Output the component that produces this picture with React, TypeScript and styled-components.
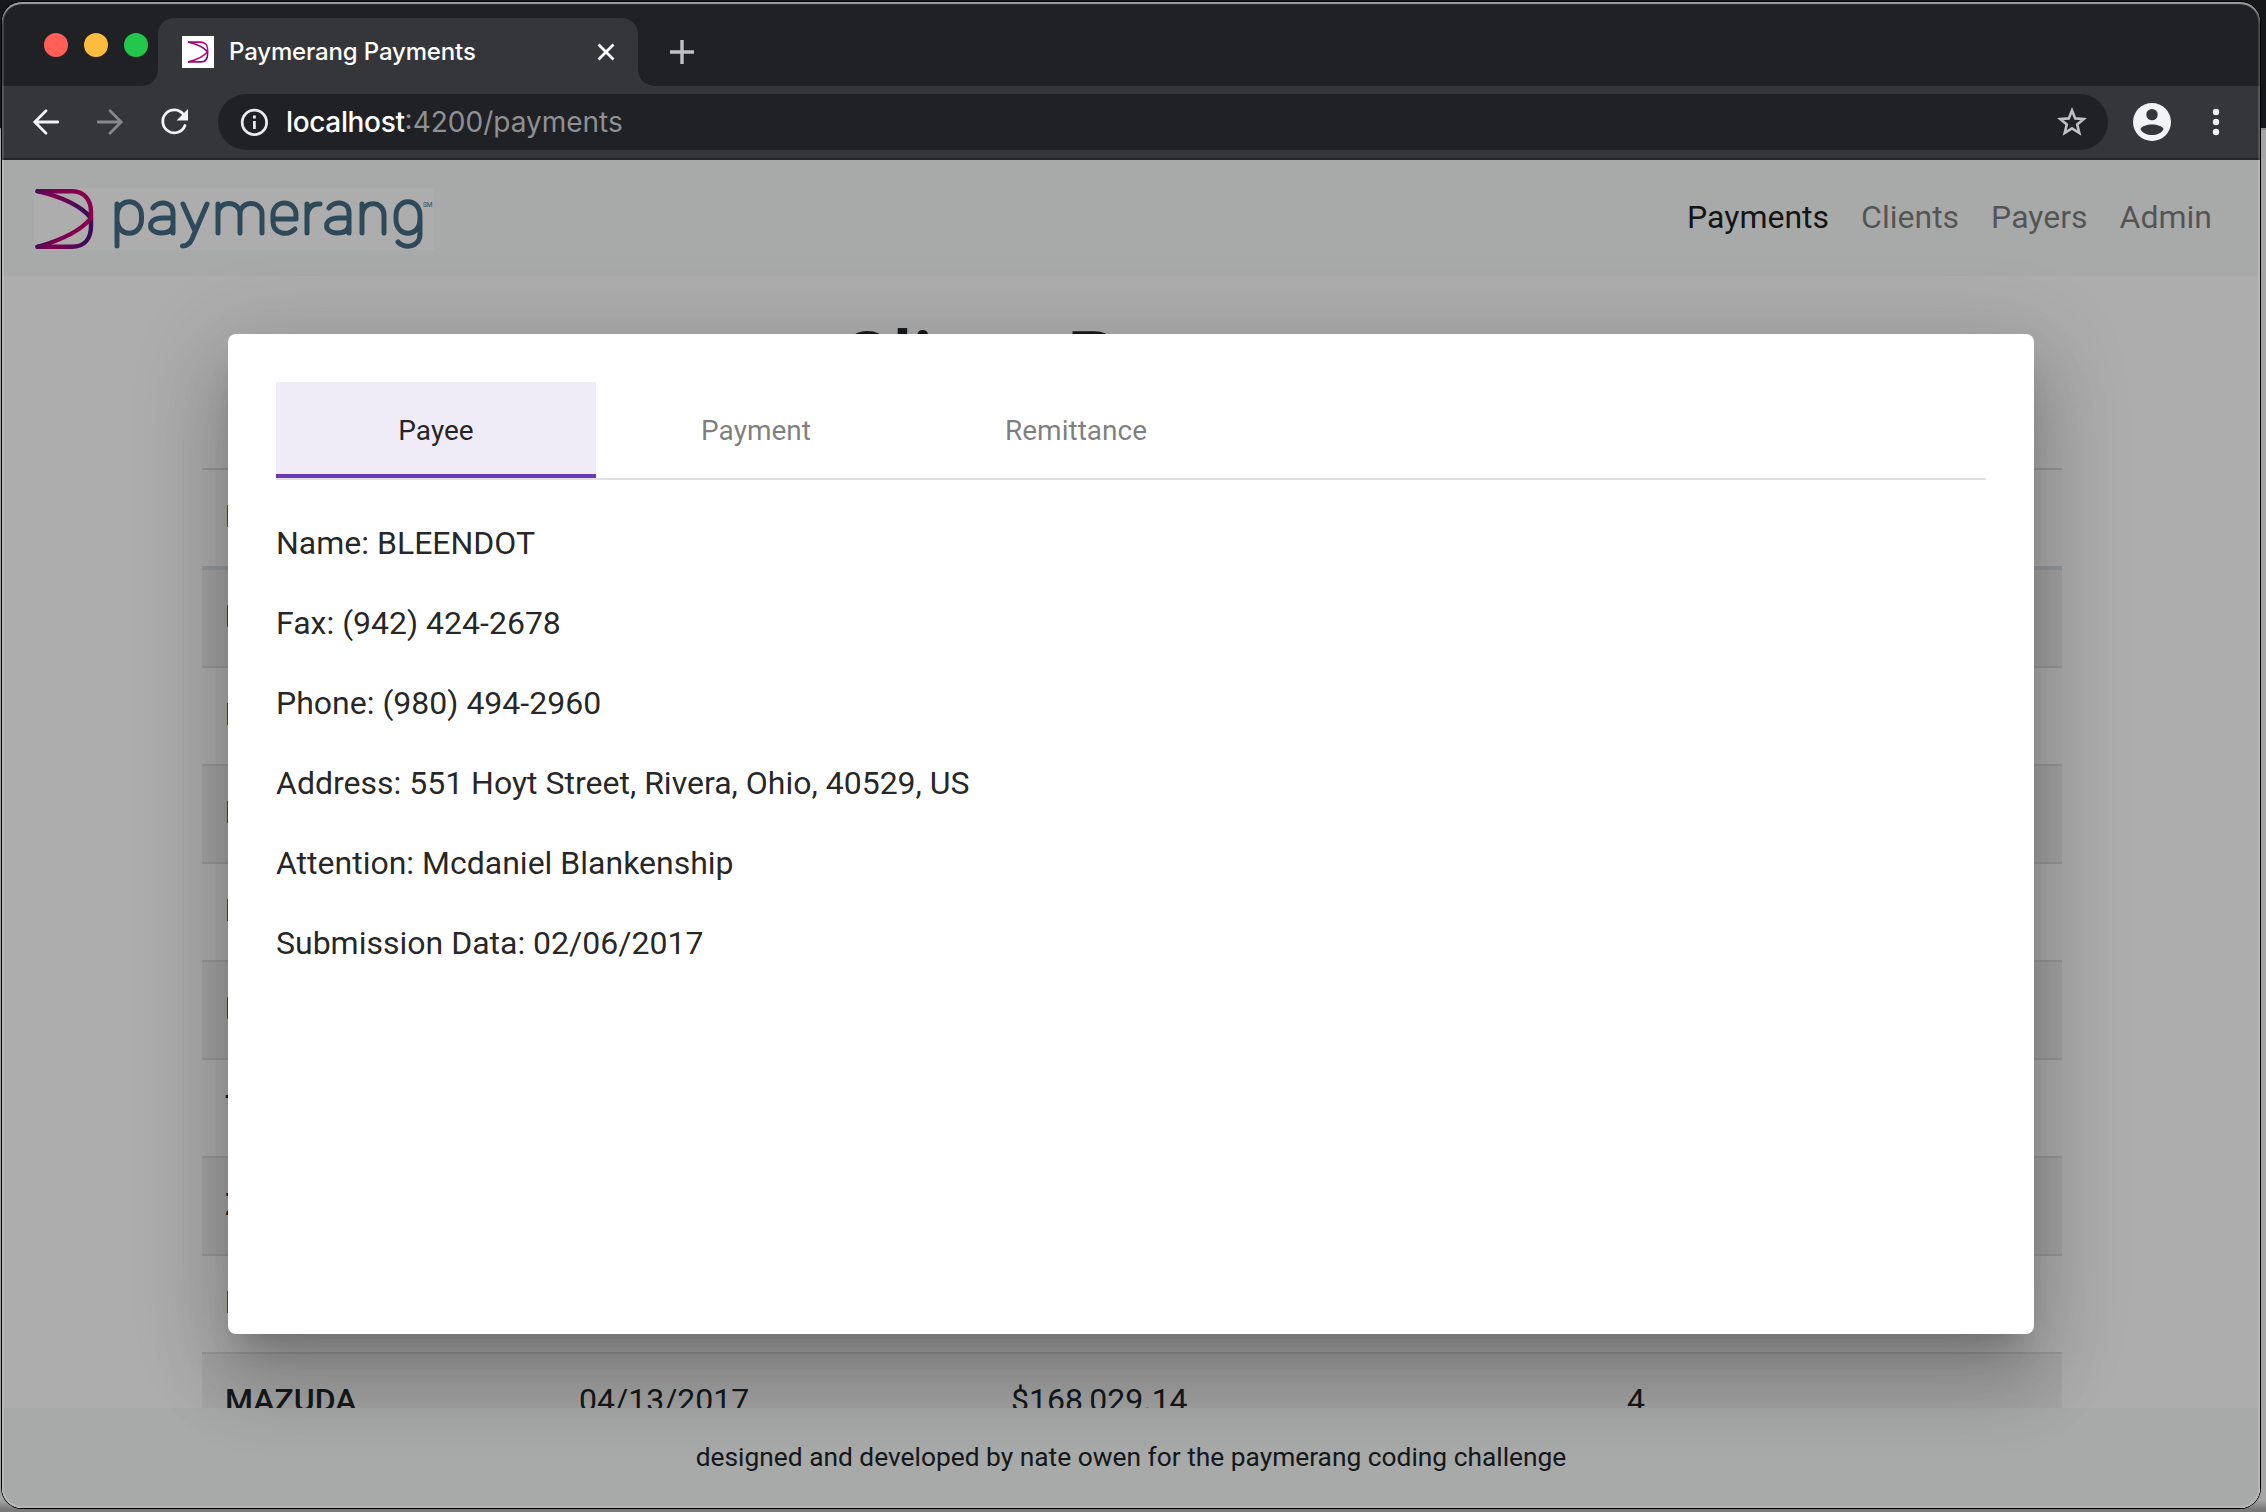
import React from "react";
import styled, { createGlobalStyle } from "styled-components";

const Global = createGlobalStyle`
  * { box-sizing: border-box; }
  html, body { margin: 0; padding: 0; }
  body { width: 2266px; height: 1512px; overflow: hidden; background: #161718; font-family: Roboto, "Liberation Sans", sans-serif; color: #212529; }
`;

const Desktop = styled.div`
  width: 2266px;
  height: 1512px;
  padding: 2px 6px 4px 2px;
  background: linear-gradient(180deg, #161718 0 128px, #8d8d8d 128px 130px, #a5a5a6 130px 1500px, #7a7a7a 1509px);
`;

const Window = styled.div`
  position: relative;
  width: 2258px;
  height: 1506px;
  display: flex;
  flex-direction: column;
  border-radius: 20px;
  overflow: hidden;
  background: #fff;
  box-shadow: 0 0 0 1px #000;
`;

const Rim = styled.div`
  position: absolute;
  inset: 0;
  border-radius: 20px;
  pointer-events: none;
  box-shadow: inset 0 0 0 2px rgba(255, 255, 255, 0.14), inset 0 2px 1px rgba(255, 255, 255, 0.5);
`;

const TabStrip = styled.div`
  flex: none;
  display: flex;
  align-items: flex-end;
  height: 84px;
  background: #202124;
`;

const Lights = styled.div`
  display: flex;
  gap: 16px;
  width: 156px;
  padding: 0 0 29px 42px;
`;

const Light = styled.span<{ $color: string }>`
  flex: none;
  width: 24px;
  height: 24px;
  border-radius: 50%;
  background: ${(p) => p.$color};
`;

const BrowserTab = styled.div`
  position: relative;
  display: flex;
  align-items: center;
  width: 480px;
  height: 68px;
  padding: 0 20px 0 24px;
  border-radius: 16px 16px 0 0;
  background: #35363a;
  color: #fff;
  &::before,
  &::after {
    content: "";
    position: absolute;
    bottom: 0;
    width: 16px;
    height: 16px;
  }
  &::before {
    left: -16px;
    background: radial-gradient(circle at 0 0, transparent 15.5px, #35363a 16px);
  }
  &::after {
    right: -16px;
    background: radial-gradient(circle at 100% 0, transparent 15.5px, #35363a 16px);
  }
`;

const Favicon = styled.span`
  display: grid;
  place-items: center;
  width: 32px;
  height: 32px;
  background: #fff;
`;

const TabTitle = styled.span`
  flex: 1;
  padding-left: 15px;
  font: 500 24px/32px Inter, sans-serif;
  letter-spacing: -0.15px;
  white-space: nowrap;
`;

const NewTab = styled.span`
  display: flex;
  padding: 0 0 20px 30px;
`;

const Toolbar = styled.div`
  flex: none;
  display: flex;
  align-items: center;
  height: 74px;
  padding: 0 28px;
  background: #35363a;
  border-bottom: 2px solid #262626;
`;

const NavIcons = styled.div`
  flex: none;
  display: flex;
  align-items: center;
  gap: 32px;
  width: 188px;
`;

const Omnibox = styled.div`
  flex: none;
  display: flex;
  align-items: center;
  width: 1890px;
  height: 56px;
  padding: 0 20px;
  border-radius: 28px;
  background: #202124;
`;

const Url = styled.span`
  flex: 1;
  padding-left: 16px;
  font: 400 28px/36px Inter, sans-serif;
  color: #8f9093;
  white-space: nowrap;
`;

const Host = styled.span`
  font-weight: 500;
  letter-spacing: -0.35px;
  color: #fff;
`;

const ToolbarEnd = styled.div`
  display: flex;
  align-items: center;
  gap: 25px;
  padding-left: 21px;
`;

const Page = styled.div`
  position: relative;
  flex: 1;
  display: flex;
  flex-direction: column;
  min-height: 0;
  overflow: hidden;
`;

const Navbar = styled.nav`
  flex: none;
  display: flex;
  align-items: center;
  justify-content: space-between;
  height: 116px;
  padding: 0 32px;
  background: #f8f9fa;
`;

const Brand = styled.div`
  display: flex;
  width: 400px;
  height: 62px;
  margin-top: 2px;
  background: #fff;
`;

const NavLinks = styled.div`
  display: flex;
  margin-bottom: 3px;
`;

const NavLink = styled.a<{ $active?: boolean }>`
  padding: 0 16px;
  font-size: 32px;
  line-height: 48px;
  color: ${(p) => (p.$active ? "rgba(0,0,0,.9)" : "rgba(0,0,0,.5)")};
`;

const Main = styled.main`
  flex: 1;
  min-height: 0;
  overflow: hidden;
  padding: 37px 198px 0 200px;
`;

const Title = styled.h1`
  height: 96px;
  margin: 0 0 59px;
  font-size: 80px;
  line-height: 96px;
  font-weight: 500;
  text-align: center;
`;

const Row = styled.div<{ $kind: "head" | "first" | "odd" | "even" }>`
  display: grid;
  grid-template-columns: 354px 432px 616px 1fr;
  height: ${(p) => (p.$kind === "head" ? 102 : p.$kind === "first" ? 96 : 98)}px;
  border-top: ${(p) => (p.$kind === "first" ? "none" : "2px solid #dee2e6")};
  border-bottom: ${(p) => (p.$kind === "head" ? "4px solid #dee2e6" : "none")};
  background: ${(p) => (p.$kind === "first" || p.$kind === "odd" ? "rgba(0,0,0,.05)" : "transparent")};
  background-clip: padding-box;
`;

const Cell = styled.span<{ $strong?: boolean }>`
  padding: 22px 23px 0;
  font-size: 32px;
  line-height: 48px;
  font-weight: ${(p) => (p.$strong ? 500 : 400)};
`;

const Footer = styled.footer`
  flex: none;
  display: flex;
  justify-content: center;
  height: 100px;
  padding-top: 28px;
  background: #f8f9fa;
  font-size: 26.34px;
  line-height: 42px;
`;

const Backdrop = styled.div`
  position: absolute;
  inset: 0;
  display: grid;
  place-items: center;
  background: rgba(0, 0, 0, 0.32);
`;

const Dialog = styled.section`
  width: 1806px;
  height: 1000px;
  padding: 48px;
  border-radius: 8px;
  background: #fff;
  color: rgba(0, 0, 0, 0.87);
  box-shadow: 0 22px 30px -14px rgba(0, 0, 0, 0.2), 0 48px 76px 6px rgba(0, 0, 0, 0.14),
    0 18px 92px 16px rgba(0, 0, 0, 0.12);
`;

const TabList = styled.div`
  display: flex;
  height: 98px;
  border-bottom: 2px solid rgba(0, 0, 0, 0.12);
`;

const Tab = styled.div<{ $active?: boolean }>`
  display: flex;
  align-items: center;
  justify-content: center;
  width: 320px;
  height: 96px;
  font-size: 28px;
  color: ${(p) => (p.$active ? "rgba(0,0,0,.87)" : "rgba(0,0,0,.52)")};
  background: ${(p) => (p.$active ? "#efebf7" : "transparent")};
  box-shadow: ${(p) => (p.$active ? "inset 0 -4px 0 #673ab7" : "none")};
`;

const Details = styled.div`
  display: flex;
  flex-direction: column;
  gap: 32px;
  padding-top: 39px;
`;

const Detail = styled.p`
  margin: 0;
  font-size: 32px;
  line-height: 48px;
`;

const BrandLines = ({ id }: { id: string }) => (
  <>
    <defs>
      <linearGradient id={id + "a"} gradientUnits="userSpaceOnUse" x1="2" y1="0" x2="58" y2="0">
        <stop offset="0" stopColor="#6a1680" />
        <stop offset="0.35" stopColor="#b80078" />
        <stop offset="1" stopColor="#d0006e" />
      </linearGradient>
      <linearGradient id={id + "b"} gradientUnits="userSpaceOnUse" x1="2" y1="0" x2="58" y2="0">
        <stop offset="0" stopColor="#8a1080" />
        <stop offset="0.3" stopColor="#c00078" />
        <stop offset="0.9" stopColor="#5a1280" />
      </linearGradient>
    </defs>
    <g fill="none" strokeWidth="4.4" strokeLinecap="round" strokeLinejoin="round">
      <path stroke={`url(#${id}b)`} d="M3.500 58.800H38C51 58.800 57 50 57 38V30C46 17 24 8 3.500 3.200" />
      <path stroke={`url(#${id}a)`} d="M3.500 3.200H38C51 3.200 57 13 57 24V30C46 44 24 53 3.500 58.800" />
    </g>
  </>
);

const Wordmark = () => (
  <svg width="400" height="62" viewBox="0 0 400 62">
    <BrandLines id="logo" />
    <g fill="none" stroke="#456e85" strokeWidth="5" strokeLinecap="round" strokeLinejoin="round">
      <path d="M83 58V16M83 28C83 9 107.500 9 107.500 28V31C107.500 50 83 50 83 31" />
      <path d="M119 20C123 13 139 12 139 25V45M139 30H128C113 30 113 45 127 45Q139 45 139 36" />
      <path d="M149 16L161 43M173 16L158 51Q155 58 148.500 58" />
      <path d="M184 45V16M184 26C184 12 206 12 206 26V45M206 26C206 12 228 12 228 26V45" />
      <path d="M239 31H262V27C262 11 239 11 239 27V33C239 47 254 48 261 41" />
      <path d="M273 45V16M273 27Q275 15 286 16" />
      <path d="M295 20C299 13 315 12 315 25V45M315 30H304C289 30 289 45 303 45Q315 45 315 36" />
      <path d="M328 45V16M328 27C328 12 350 12 350 27V45" />
      <path d="M386 31C386 50 362 50 362 31V28C362 9 386 9 386 28V46C386 60 369 61 364 54" />
    </g>
    <text x="389" y="19" fontFamily="Roboto" fontSize="6.5" fill="#456e85">SM</text>
  </svg>
);

const line = { fill: "none", stroke: "#f1f3f4", strokeWidth: 2.8 };

const rows: [("head" | "first" | "odd" | "even"), string, string, string, string][] = [
  ["head", "P", "", "", ""],
  ["first", "B", "", "", ""],
  ["even", "E", "", "", ""],
  ["odd", "E", "", "", ""],
  ["even", "E", "", "", ""],
  ["odd", "E", "", "", ""],
  ["even", "T", "", "", ""],
  ["odd", "Z", "", "", ""],
  ["even", "E", "", "", ""],
  ["odd", "MAZUDA", "04/13/2017", "$168,029.14", "4"],
];

const details = [
  "Name: BLEENDOT",
  "Fax: (942) 424-2678",
  "Phone: (980) 494-2960",
  "Address: 551 Hoyt Street, Rivera, Ohio, 40529, US",
  "Attention: Mcdaniel Blankenship",
  "Submission Data: 02/06/2017",
];

export default function App() {
  return (
    <Desktop>
      <Global />
      <Window>
        <TabStrip>
          <Lights>
            <Light $color="#ff5f57" />
            <Light $color="#febc3f" />
            <Light $color="#22c84c" />
          </Lights>
          <BrowserTab>
            <Favicon>
              <svg width="22" height="22" viewBox="0 0 60 62">
                <BrandLines id="fav" />
              </svg>
            </Favicon>
            <TabTitle>Paymerang Payments</TabTitle>
            <svg width="24" height="24" viewBox="0 0 24 24" {...line} stroke="#fff">
              <path d="M4.5 4.5L19.5 19.5M19.5 4.5L4.5 19.5" />
            </svg>
          </BrowserTab>
          <NewTab>
            <svg width="28" height="28" viewBox="0 0 28 28" fill="none" stroke="#bdc1c6" strokeWidth="3.4">
              <path d="M14 2V26M2 14H26" />
            </svg>
          </NewTab>
        </TabStrip>
        <Toolbar>
          <NavIcons>
            <svg width="32" height="32" viewBox="0 0 32 32" {...line} strokeLinecap="round">
              <path d="M27.800 16H5M16 4.800L4.800 16L16 27.200" />
            </svg>
            <svg width="32" height="32" viewBox="0 0 32 32" {...line} stroke="#86888a" strokeLinecap="round">
              <path d="M4.200 16H27M16 4.800L27.200 16L16 27.200" />
            </svg>
            <svg width="32" height="32" viewBox="0 0 32 32" {...line} strokeLinecap="round">
              <path d="M25.500 8.500A11.500 11.500 0 1 0 27 19.500" />
              <path d="M30 3V14.500H18.500Z" fill="#f1f3f4" stroke="none" />
            </svg>
          </NavIcons>
          <Omnibox>
            <svg width="32" height="32" viewBox="0 0 32 32" {...line} stroke="#e8eaed">
              <circle cx="16.400" cy="16.400" r="12.200" />
              <path d="M16.400 15V23M16.400 9.600V12.600" />
            </svg>
            <Url>
              <Host>localhost</Host>:4200/payments
            </Url>
            <svg width="32" height="32" viewBox="0 0 32 32" fill="none" stroke="#bdc1c6" strokeWidth="2.6">
              <path d="M16 4.500L19.200 12.400L27.700 13L21.200 18.500L23.300 27L16 22.400L8.700 27L10.800 18.500L4.300 13L12.800 12.400Z" />
            </svg>
          </Omnibox>
          <ToolbarEnd>
            <svg width="46" height="46" viewBox="0 0 46 46" fill="#f1f3f4">
              <circle cx="23" cy="23" r="19" />
              <circle cx="23" cy="15.600" r="5.700" fill="#35363a" />
              <path fill="#35363a" d="M11.500 30C14 24 32 24 34.500 30C31 38 15 38 11.500 30Z" />
            </svg>
            <svg width="32" height="32" viewBox="0 0 32 32" fill="#f1f3f4">
              <circle cx="16" cy="6" r="3.200" />
              <circle cx="16" cy="16" r="3.200" />
              <circle cx="16" cy="26" r="3.200" />
            </svg>
          </ToolbarEnd>
        </Toolbar>
        <Page>
          <Navbar>
            <Brand>
              <Wordmark />
            </Brand>
            <NavLinks>
              <NavLink $active>Payments</NavLink>
              <NavLink>Clients</NavLink>
              <NavLink>Payers</NavLink>
              <NavLink>Admin</NavLink>
            </NavLinks>
          </Navbar>
          <Main>
            <Title>Client Payments</Title>
            {rows.map(([kind, name, date, amount, count], i) => (
              <Row key={i} $kind={kind}>
                <Cell $strong>{name}</Cell>
                <Cell>{date}</Cell>
                <Cell>{amount}</Cell>
                <Cell>{count}</Cell>
              </Row>
            ))}
          </Main>
          <Footer>designed and developed by nate owen for the paymerang coding challenge</Footer>
          <Backdrop>
            <Dialog>
              <TabList>
                <Tab $active>Payee</Tab>
                <Tab>Payment</Tab>
                <Tab>Remittance</Tab>
              </TabList>
              <Details>
                {details.map((d) => (
                  <Detail key={d}>{d}</Detail>
                ))}
              </Details>
            </Dialog>
          </Backdrop>
        </Page>
        <Rim />
      </Window>
    </Desktop>
  );
}
